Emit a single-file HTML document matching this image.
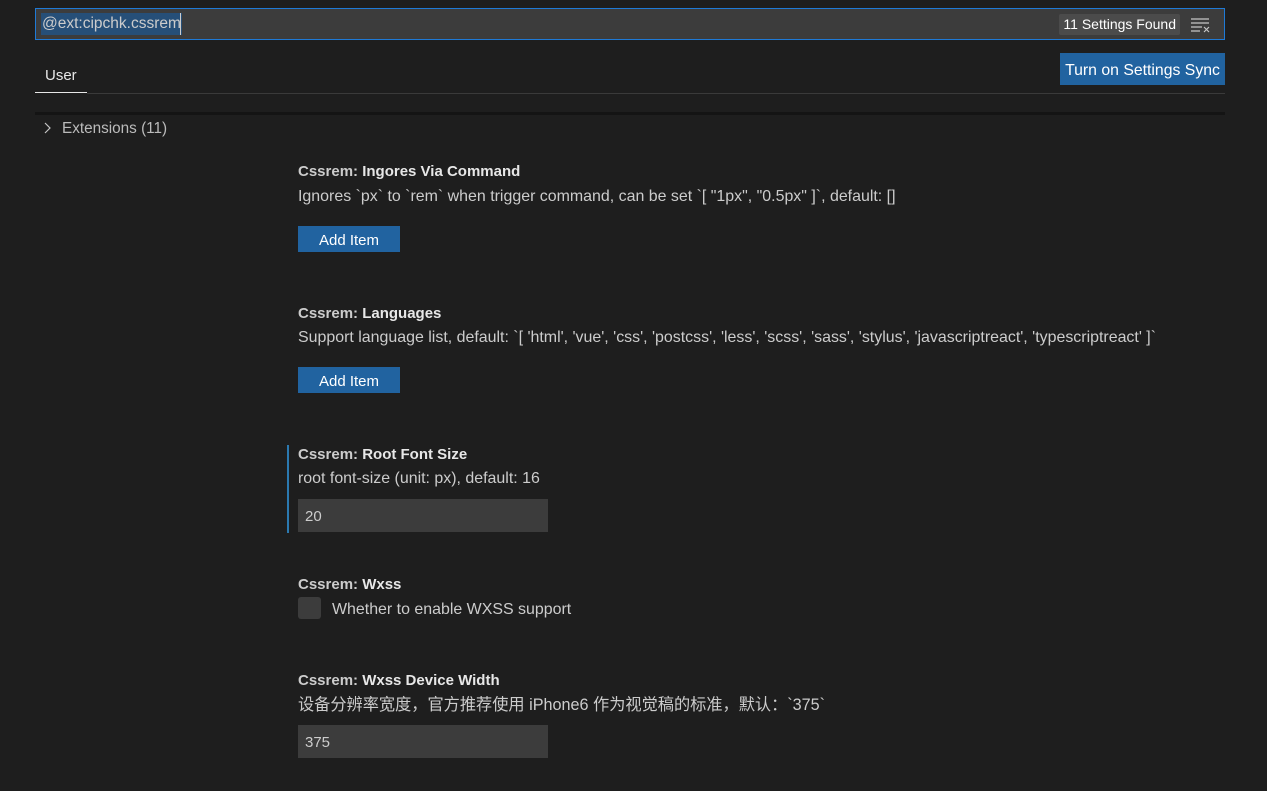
<!DOCTYPE html>
<html><head><meta charset="utf-8"><style>
*{margin:0;padding:0;box-sizing:border-box}
body{width:1267px;height:791px;background:#1e1e1e;font-family:"Liberation Sans","Noto Sans CJK SC",sans-serif;color:#cccccc;position:relative;overflow:hidden;font-size:15px}
.abs{position:absolute}
.search{left:35px;top:8px;width:1190px;height:32px;background:#3c3c3c;border:1px solid #1f7ad6}
.sel{left:5px;top:4px;height:22px;background:#264f78;color:#ccc;font-size:15.5px;line-height:22px;padding:0 1px}
.found{right:44px;top:5px;height:21px;background:#4b4b4b;border-radius:2px;color:#fff;font-size:14px;line-height:21px;padding:0 4px}
.t{font-size:15.95px;line-height:18px;white-space:nowrap}
.title{color:#ccc;font-weight:bold;font-size:15px}
.title b{color:#e7e7e7}
.btn{background:#2163a0;color:#fff;font-size:15px;text-align:center;line-height:29px}
.inp{background:#3c3c3c;color:#ccc;width:250px;height:33px;line-height:36px;padding-left:7px;font-size:15px}
</style></head><body>
<div class="abs search">
 <div class="abs sel">@ext:cipchk.cssrem</div>
 <div class="abs" style="left:144px;top:4px;width:1px;height:22px;background:#ccc"></div>
 <div class="abs found">11 Settings Found</div>
 <svg class="abs" style="right:14px;top:8px" width="20" height="16" viewBox="0 0 20 16"><g stroke="#c5c5c5" stroke-width="1.2" fill="none"><path d="M1 2h18M1 6h18M1 10h11M1 14h9M14 10l5 5M19 10l-5 5"/></g></svg>
</div>
<div class="abs t" style="left:45px;top:67px;color:#e7e7e7;font-size:15px">User</div>
<div class="abs" style="left:35px;top:92px;width:52px;height:1px;background:#e7e7e7"></div>
<div class="abs" style="left:87px;top:93px;width:1138px;height:1px;background:#3a3a3a"></div>
<div class="abs btn" style="left:1060px;top:53px;width:165px;height:32px;line-height:36px;font-size:15.8px">Turn on Settings Sync</div>
<div class="abs" style="left:35px;top:112px;width:1190px;height:3px;background:#141414"></div>
<svg class="abs" style="left:42px;top:121px" width="12" height="14"><path d="M3 2l5 5-5 5" stroke="#c5c5c5" stroke-width="1.2" fill="none"/></svg>
<div class="abs t" style="left:62px;top:120px;color:#bbb;font-size:15.3px">Extensions (11)</div>

<div class="abs t title" style="left:298px;top:163px">Cssrem: <b>Ingores Via Command</b></div>
<div class="abs t" style="left:298px;top:188px">Ignores `px` to `rem` when trigger command, can be set `[ "1px", "0.5px" ]`, default: []</div>
<div class="abs btn" style="left:298px;top:226px;width:102px;height:26px">Add Item</div>

<div class="abs t title" style="left:298px;top:305px">Cssrem: <b>Languages</b></div>
<div class="abs t" style="left:298px;top:329px">Support language list, default: `[ 'html', 'vue', 'css', 'postcss', 'less', 'scss', 'sass', 'stylus', 'javascriptreact', 'typescriptreact' ]`</div>
<div class="abs btn" style="left:298px;top:367px;width:102px;height:26px">Add Item</div>

<div class="abs" style="left:287px;top:445px;width:2px;height:88px;background:#2b79b0"></div>
<div class="abs t title" style="left:298px;top:446px">Cssrem: <b>Root Font Size</b></div>
<div class="abs t" style="left:298px;top:470px">root font-size (unit: px), default: 16</div>
<div class="abs inp" style="left:298px;top:499px">20</div>

<div class="abs t title" style="left:298px;top:576px">Cssrem: <b>Wxss</b></div>
<div class="abs" style="left:298px;top:597px;width:23px;height:22px;background:#3c3c3c;border-radius:3px"></div>
<div class="abs t" style="left:332px;top:601px">Whether to enable WXSS support</div>

<div class="abs t title" style="left:298px;top:672px">Cssrem: <b>Wxss Device Width</b></div>
<div class="abs t" style="left:298px;top:696px;font-size:16.2px">设备分辨率宽度，官方推荐使用 iPhone6 作为视觉稿的标准，默认：`375`</div>
<div class="abs inp" style="left:298px;top:725px">375</div>
</body></html>
